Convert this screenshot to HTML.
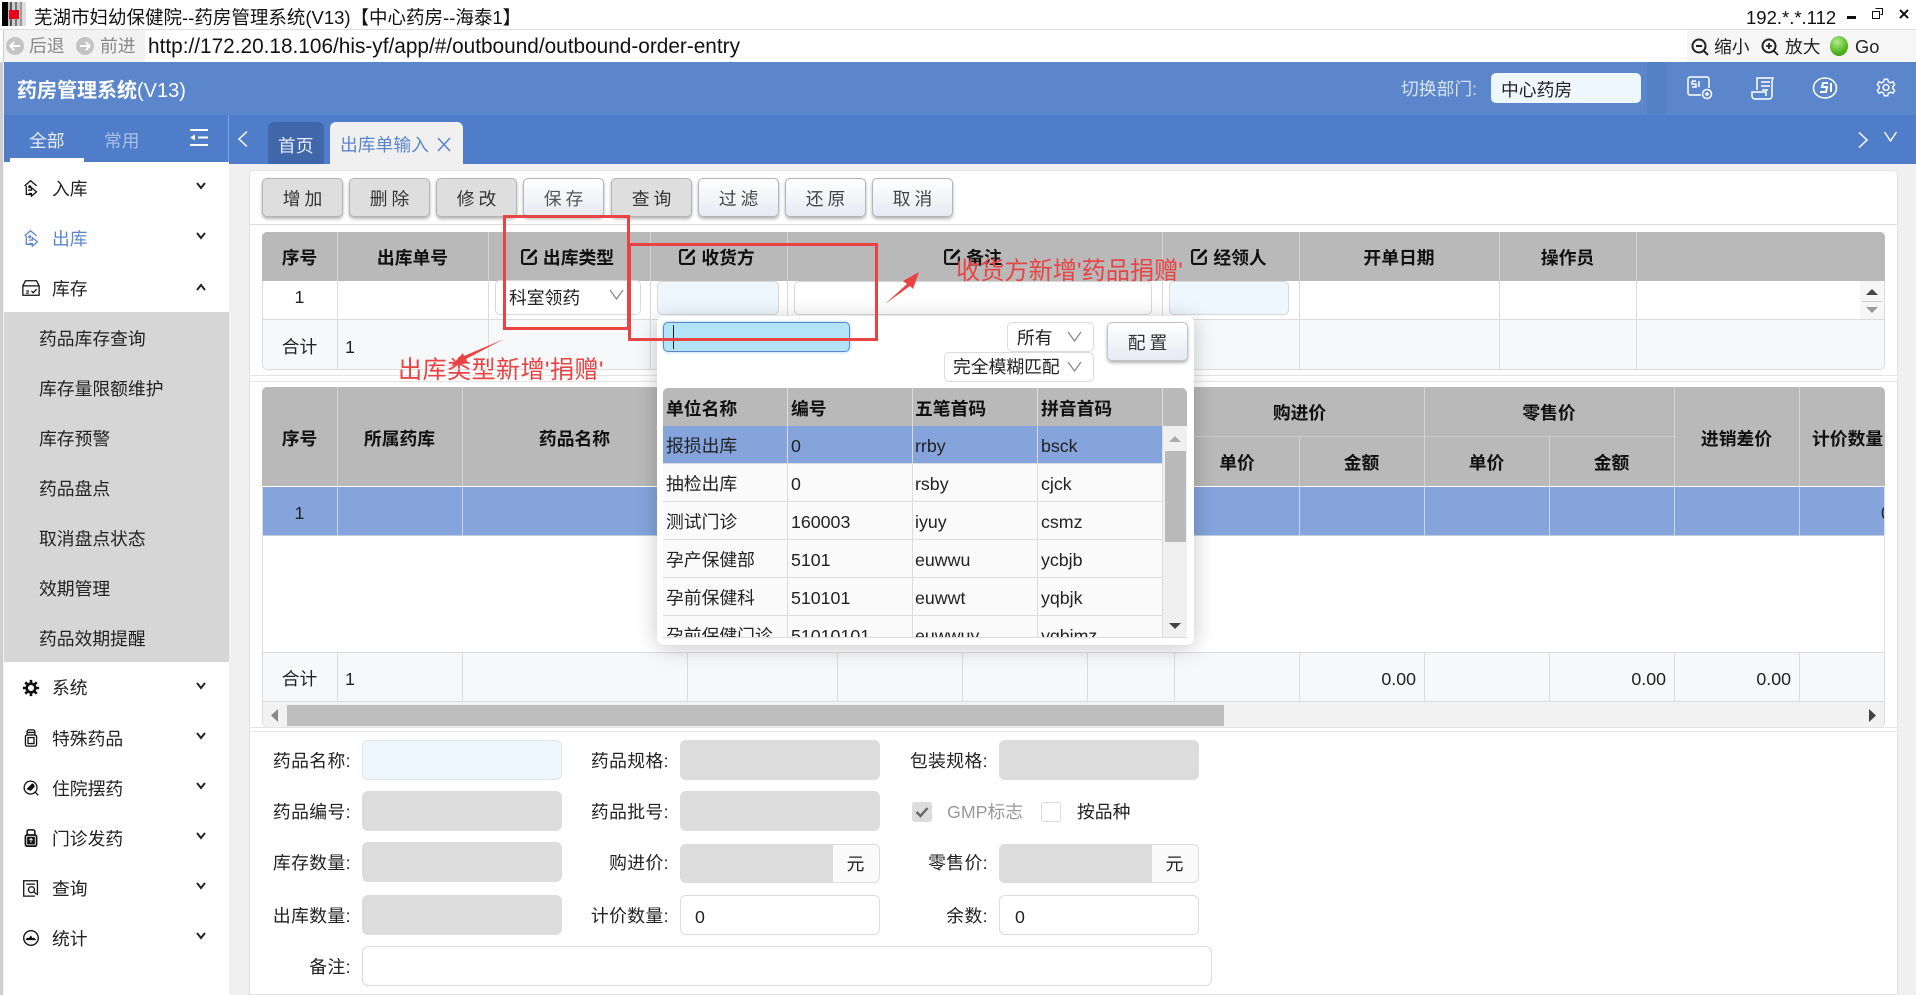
<!DOCTYPE html>
<html lang="zh-CN">
<head>
<meta charset="utf-8">
<title>药房管理系统</title>
<style>
html,body{margin:0;padding:0;width:1916px;height:995px;overflow:hidden;background:#f0f0f0}
body{position:relative;font-family:"Liberation Sans","Noto Sans CJK SC",sans-serif;font-size:17.8px;color:#222}
div,span,svg{box-sizing:border-box}
.a{position:absolute}
.t{position:absolute;white-space:nowrap;height:24px;line-height:24px}
.c{text-align:center}
.r{text-align:right}
.b{font-weight:bold;color:#111}
.v{position:absolute;width:1px;background:#dcdcdc}
.vh{position:absolute;width:1px;background:#d4d4d4}
.l{position:absolute;height:1px;background:#dcdcdc}
.btn{position:absolute;top:178px;width:81px;height:39px;line-height:41px;text-align:center;border:1px solid #b4b4b4;border-radius:5px;box-shadow:0 2px 3px rgba(0,0,0,.3);letter-spacing:4px;text-indent:4px;color:#333}
.g{background:#dedede}
.w{background:linear-gradient(#fff,#e6eaf2)}
.sub{position:absolute;left:39px;white-space:nowrap;height:24px;line-height:24px;color:#222}
.men{position:absolute;left:52px;white-space:nowrap;height:24px;line-height:24px;color:#222}
.f{position:absolute;width:200px;height:40px;border-radius:6px}
.dis{background:#dcdcdc}
.inp{background:#fff;border:1px solid #dcdcdc}
.lb{position:absolute;white-space:nowrap;height:24px;line-height:24px;text-align:right;color:#222;letter-spacing:.4px}
.chev{position:absolute;left:194px;width:14px;height:10px}
.ic{position:absolute;left:22px;width:18px;height:18px}
.ed{vertical-align:-2px;margin-right:4px}
</style>
</head>
<body>

<!-- title bar -->
<div class="a" style="left:0;top:0;width:1916px;height:30px;background:#fff;border-bottom:1px solid #dedede"></div>
<div class="a" style="left:2px;top:2px;width:24px;height:24px;background:linear-gradient(90deg,#000 0 6px,#bbb 6px 8px,#555 8px 10px,#ccc 10px 13px,#777 13px 15px,#ccc 15px 18px,#999 18px 20px,#ddd 20px 24px)"></div>
<div class="a" style="left:9px;top:10px;width:10px;height:9px;background:#e8001c"></div>
<div class="t" style="left:34px;top:6px;font-size:18.5px;color:#111">芜湖市妇幼保健院--药房管理系统(V13)【中心药房--海泰1】</div>
<div class="t" style="left:1746px;top:6px;font-size:18.5px;color:#111">192.*.*.112</div>
<div class="a" style="left:1847px;top:16px;width:9px;height:3px;background:#111"></div>
<svg class="a" style="left:1872px;top:8px" width="11" height="11" viewBox="0 0 11 11"><path d="M3.500 .5h7v6h-2M.5 3.500h7v7h-7z" fill="none" stroke="#111"/></svg>
<svg class="a" style="left:1899px;top:9px" width="10" height="10" viewBox="0 0 10 10"><path d="M1 1l8 8M9 1L1 9" stroke="#111" stroke-width="2"/></svg>

<!-- address bar -->
<div class="a" style="left:0;top:30px;width:1916px;height:32px;background:#fff"></div>
<div class="a" style="left:3px;top:30px;width:142px;height:32px;background:#f2f2f2;border-left:1px solid #ccc"></div>
<div class="a" style="left:6px;top:37px;width:18px;height:18px;border-radius:50%;background:#c4c4c4"></div>
<svg class="a" style="left:9px;top:41px" width="12" height="10" viewBox="0 0 12 10"><path d="M5 1L1.500 5 5 9M2 5h9" fill="none" stroke="#fff" stroke-width="2"/></svg>
<div class="t" style="left:29px;top:34px;color:#888">后退</div>
<div class="a" style="left:76px;top:37px;width:18px;height:18px;border-radius:50%;background:#c4c4c4"></div>
<svg class="a" style="left:79px;top:41px" width="12" height="10" viewBox="0 0 12 10"><path d="M7 1l3.500 4L7 9M10 5H1" fill="none" stroke="#fff" stroke-width="2"/></svg>
<div class="t" style="left:100px;top:34px;color:#888">前进</div>
<div class="t" style="left:148px;top:35px;font-size:20.8px;color:#111">http://172.20.18.106/his-yf/app/#/outbound/outbound-order-entry</div>
<div class="a" style="left:1687px;top:31px;width:229px;height:31px;background:#f6f6f6"></div>
<svg class="a" style="left:1690px;top:37px" width="20" height="20" viewBox="0 0 20 20"><circle cx="9" cy="9" r="6.500" fill="none" stroke="#222" stroke-width="2"/><path d="M6 9h6M14 14l4 4" stroke="#222" stroke-width="2"/></svg>
<div class="t" style="left:1714px;top:35px;color:#222">缩小</div>
<svg class="a" style="left:1760px;top:37px" width="20" height="20" viewBox="0 0 20 20"><circle cx="9" cy="9" r="6.500" fill="none" stroke="#222" stroke-width="2"/><path d="M6 9h6M9 6v6M14 14l4 4" stroke="#222" stroke-width="1.800"/></svg>
<div class="t" style="left:1785px;top:35px;color:#222">放大</div>
<div class="a" style="left:1830px;top:36px;width:18px;height:20px;border-radius:50%;background:radial-gradient(circle at 40% 30%,#b6ec8e,#52b51f 60%,#2d8a10)"></div>
<div class="t" style="left:1855px;top:35px;font-size:18.3px;color:#222">Go</div>

<!-- app header -->
<div class="a" style="left:4px;top:62px;width:1912px;height:53px;background:#5b86cc"></div>
<div class="t" style="left:17px;top:79px;font-size:20px;font-weight:bold;color:#fff">药房管理系统<span style="font-weight:normal">(V13)</span></div>
<div class="t" style="left:1401px;top:77px;color:#d6e2f4">切换部门:</div>
<div class="a" style="left:1491px;top:73px;width:150px;height:30px;background:#eef6fe;border-radius:5px"></div>
<div class="t" style="left:1501px;top:78px;color:#222">中心药房</div>
<div class="a" style="left:1647px;top:62px;width:20px;height:52px;background:#5480c6"></div>
<svg class="a" style="left:1687px;top:76px" width="26" height="24" viewBox="0 0 26 24" fill="none" stroke="#fff" stroke-width="1.500"><path d="M14 19H3a2 2 0 0 1-2-2V3a2 2 0 0 1 2-2h17a2 2 0 0 1 2 2v9"/><circle cx="20" cy="18" r="4.500"/><circle cx="20" cy="18" r="1" fill="#fff"/><path d="M5 5h4M5 5v3h4v3H5M12 5v6"/></svg>
<svg class="a" style="left:1750px;top:76px" width="26" height="24" viewBox="0 0 26 24" fill="none" stroke="#fff" stroke-width="1.500"><path d="M7 14V2h16l-1 3v15a3 3 0 0 1-3 3H5a3 3 0 0 1-3-3v-4h14v4"/><path d="M11 6h9M11 10h9M12 14h6"/></svg>
<svg class="a" style="left:1809px;top:76px" width="32" height="24" viewBox="0 0 32 24" fill="none" stroke="#fff" stroke-width="1.600"><ellipse cx="16" cy="12" rx="11.500" ry="10"/><path d="M19 7h-5l-1 4h5l-1 5h-6M22 7v9" stroke-width="2"/></svg>
<svg class="a" style="left:1876px;top:77px" width="20" height="21" viewBox="0 0 24 24" fill="none" stroke="#fff" stroke-width="1.700"><circle cx="12" cy="12" r="3.500"/><path d="M10 2h4l.8 3 2.700 1.500L20.400 5l2 3.500-2.200 2.200v2.600l2.200 2.200-2 3.500-2.900-1.500-2.700 1.500-.8 3h-4l-.8-3-2.700-1.500L3.600 19l-2-3.500 2.200-2.200v-2.600L1.600 8.500l2-3.500 2.900 1.500L9.200 5z"/></svg>

<!-- tabs bar -->
<div class="a" style="left:4px;top:115px;width:1912px;height:49px;background:#4f7dc9"></div>
<div class="a" style="left:228px;top:115px;width:1px;height:49px;background:#84a4db"></div>
<div class="t" style="left:29px;top:129px;color:#e6edf9">全部</div>
<div class="t" style="left:104px;top:129px;color:#a9c0e6">常用</div>
<div class="a" style="left:10px;top:158px;width:74px;height:4px;background:#fff"></div>
<svg class="a" style="left:190px;top:129px" width="19" height="17" viewBox="0 0 19 17"><path d="M0 1h18M8 8.500h10M0 16h18" stroke="#fff" stroke-width="2"/><path d="M5 5.500v6L0 8.500z" fill="#fff"/></svg>
<svg class="a" style="left:237px;top:130px" width="12" height="18" viewBox="0 0 12 18"><path d="M10 1.500L2 9l8 7.500" fill="none" stroke="#fff" stroke-width="1.500"/></svg>
<div class="a" style="left:268px;top:122px;width:56px;height:42px;background:#3f67aa;border-radius:6px 6px 0 0"></div>
<div class="t" style="left:278px;top:134px;color:#e8eef8">首页</div>
<div class="a" style="left:330px;top:122px;width:133px;height:42px;background:#f0f0f0;border-radius:6px 6px 0 0"></div>
<div class="t" style="left:340px;top:133px;color:#5b86cc">出库单输入</div>
<svg class="a" style="left:437px;top:137px" width="14" height="15" viewBox="0 0 14 15"><path d="M1 1l12 13M13 1L1 14" stroke="#5b86cc" stroke-width="1.600"/></svg>
<svg class="a" style="left:1857px;top:131px" width="12" height="18" viewBox="0 0 12 18"><path d="M2 1.500L10 9l-8 7.500" fill="none" stroke="#fff" stroke-width="1.500"/></svg>
<svg class="a" style="left:1883px;top:131px" width="15" height="11" viewBox="0 0 15 11"><path d="M1.500 1L7.500 10l6-9" fill="none" stroke="#fff" stroke-width="1.400"/></svg>

<!-- sidebar -->
<div class="a" style="left:0;top:62px;width:3px;height:933px;background:#cfcfcf"></div>
<div class="a" style="left:4px;top:162px;width:225px;height:833px;background:#fff"></div>
<div class="a" style="left:4px;top:312px;width:225px;height:350px;background:#d6d6d6"></div>
<div class="men" style="top:177px">入库</div>
<div class="men" style="top:227px;color:#5b86cc">出库</div>
<div class="men" style="top:277px">库存</div>
<div class="sub" style="top:327px">药品库存查询</div>
<div class="sub" style="top:377px">库存量限额维护</div>
<div class="sub" style="top:427px">库存预警</div>
<div class="sub" style="top:477px">药品盘点</div>
<div class="sub" style="top:527px">取消盘点状态</div>
<div class="sub" style="top:577px">效期管理</div>
<div class="sub" style="top:627px">药品效期提醒</div>
<div class="men" style="top:676px">系统</div>
<div class="men" style="top:727px">特殊药品</div>
<div class="men" style="top:777px">住院摆药</div>
<div class="men" style="top:827px">门诊发药</div>
<div class="men" style="top:877px">查询</div>
<div class="men" style="top:927px">统计</div>

<svg class="chev" style="top:181px" viewBox="0 0 14 10"><path d="M3 2l4 5 4-5" fill="none" stroke="#222" stroke-width="2"/></svg>
<svg class="chev" style="top:231px" viewBox="0 0 14 10"><path d="M3 2l4 5 4-5" fill="none" stroke="#222" stroke-width="2"/></svg>
<svg class="chev" style="top:282px" viewBox="0 0 14 10"><path d="M3 8l4-5 4 5" fill="none" stroke="#222" stroke-width="2"/></svg>
<svg class="chev" style="top:681px" viewBox="0 0 14 10"><path d="M3 2l4 5 4-5" fill="none" stroke="#222" stroke-width="2"/></svg>
<svg class="chev" style="top:731px" viewBox="0 0 14 10"><path d="M3 2l4 5 4-5" fill="none" stroke="#222" stroke-width="2"/></svg>
<svg class="chev" style="top:781px" viewBox="0 0 14 10"><path d="M3 2l4 5 4-5" fill="none" stroke="#222" stroke-width="2"/></svg>
<svg class="chev" style="top:831px" viewBox="0 0 14 10"><path d="M3 2l4 5 4-5" fill="none" stroke="#222" stroke-width="2"/></svg>
<svg class="chev" style="top:881px" viewBox="0 0 14 10"><path d="M3 2l4 5 4-5" fill="none" stroke="#222" stroke-width="2"/></svg>
<svg class="chev" style="top:931px" viewBox="0 0 14 10"><path d="M3 2l4 5 4-5" fill="none" stroke="#222" stroke-width="2"/></svg>

<svg class="ic" style="top:179px" viewBox="0 0 21 21" fill="none" stroke="#111" stroke-width="1.500"><path d="M3 8l7-6 7 6M5 8v10h6M5 18h5"/><circle cx="9" cy="9" r="1" fill="#111"/><path d="M7 13h4v-3l6 5-6 5v-3H8"/></svg>
<svg class="ic" style="top:229px" viewBox="0 0 21 21" fill="none" stroke="#5b86cc" stroke-width="1.500"><path d="M3 8l7-6 7 6M5 8v10h6M5 18h5"/><circle cx="9" cy="9" r="1" fill="#5b86cc"/><path d="M8 13h4v-3l6 5-6 5v-3H8"/></svg>
<svg class="ic" style="top:279px" viewBox="0 0 21 21" fill="none" stroke="#111" stroke-width="1.500"><path d="M1 8l3-6h13l3 6v11H1zM1 8h19M5 14h3M5 16.500h3M11 14l2 2 4-4"/></svg>
<svg class="ic" style="top:679px" viewBox="0 0 21 21"><circle cx="10.500" cy="10.500" r="5" fill="none" stroke="#111" stroke-width="3"/><path d="M10.500 1v4M10.500 16v4M1 10.500h4M16 10.500h4M3.800 3.800l3 3M14.200 14.200l3 3M17.200 3.800l-3 3M6.800 14.200l-3 3" stroke="#111" stroke-width="3"/></svg>
<svg class="ic" style="top:729px" viewBox="0 0 21 21" fill="none" stroke="#111" stroke-width="1.500"><rect x="4" y="7" width="13" height="13" rx="2"/><rect x="7" y="10" width="7" height="7"/><path d="M6 7V3a2 2 0 0 1 2-2h5a2 2 0 0 1 2 2v4M6 4h9"/></svg>
<svg class="ic" style="top:779px" viewBox="0 0 21 21" fill="none" stroke="#111" stroke-width="1.500"><circle cx="10" cy="10" r="7.500"/><path d="M15 15l4 4"/><path d="M6.500 11.500L12 6a3 3 0 0 1 2 3l-4 4z" fill="#111"/></svg>
<svg class="ic" style="top:829px" viewBox="0 0 21 21"><rect x="4" y="7" width="13" height="13" rx="2" fill="none" stroke="#111" stroke-width="2"/><path d="M6 7V3a2 2 0 0 1 2-2h5a2 2 0 0 1 2 2v4" fill="none" stroke="#111" stroke-width="1.800"/><rect x="6" y="9" width="9" height="9" fill="#111"/><path d="M10.500 16v-5M8.500 13l2-2 2 2" stroke="#fff" fill="none"/></svg>
<svg class="ic" style="top:879px" viewBox="0 0 21 21" fill="none" stroke="#111" stroke-width="1.500"><path d="M18 19V2H2v18h13M5 6h10"/><circle cx="11" cy="12.500" r="3.500"/><path d="M14 15l3 3"/></svg>
<svg class="ic" style="top:929px" viewBox="0 0 21 21"><circle cx="10.500" cy="10.500" r="8.500" fill="none" stroke="#111" stroke-width="1.600"/><path d="M4 13h13l-3-3-2 .5-1.500-3-2.500 3L6 10z" fill="#111"/></svg>

<!-- main card -->
<div class="a" style="left:249px;top:170px;width:1649px;height:825px;background:#fff;border:1px solid #e2e2e2;border-radius:5px 5px 0 0"></div>
<div class="btn g" style="left:262px">增加</div>
<div class="btn g" style="left:349px">删除</div>
<div class="btn g" style="left:436px">修改</div>
<div class="btn w" style="left:523px;color:#555">保存</div>
<div class="btn g" style="left:611px">查询</div>
<div class="btn w" style="left:698px;color:#444">过滤</div>
<div class="btn w" style="left:785px;color:#444">还原</div>
<div class="btn w" style="left:872px;color:#444">取消</div>
<div class="l" style="left:250px;top:224px;width:1647px"></div>

<!-- table 1 -->
<div class="a" style="left:262px;top:232px;width:1623px;height:138px;background:#fff;border:1px solid #dcdcdc;border-radius:5px"></div>
<div class="a" style="left:262px;top:232px;width:1623px;height:49px;background:#b9b9b9;border-radius:5px 5px 0 0"></div>
<div class="a" style="left:263px;top:320px;width:1621px;height:49px;background:#f7f8fa;border-radius:0 0 5px 5px"></div>
<div class="l" style="left:262px;top:319px;width:1623px;background:#dcdcdc"></div>
<div class="vh" style="left:337px;top:232px;height:49px"></div><div class="vh" style="left:488px;top:232px;height:49px"></div><div class="vh" style="left:650px;top:232px;height:49px"></div><div class="vh" style="left:787px;top:232px;height:49px"></div><div class="vh" style="left:1162px;top:232px;height:49px"></div><div class="vh" style="left:1299px;top:232px;height:49px"></div><div class="vh" style="left:1499px;top:232px;height:49px"></div><div class="vh" style="left:1636px;top:232px;height:49px"></div>
<div class="v" style="left:337px;top:281px;height:89px"></div><div class="v" style="left:488px;top:281px;height:89px"></div><div class="v" style="left:650px;top:281px;height:89px"></div><div class="v" style="left:787px;top:281px;height:89px"></div><div class="v" style="left:1162px;top:281px;height:89px"></div><div class="v" style="left:1299px;top:281px;height:89px"></div><div class="v" style="left:1499px;top:281px;height:89px"></div><div class="v" style="left:1636px;top:281px;height:89px"></div>
<div class="t b c" style="left:262px;width:75px;top:246px">序号</div>
<div class="t b c" style="left:337px;width:151px;top:246px">出库单号</div>
<div class="t b c" style="left:486px;width:162px;top:246px"><svg class="ed" width="19" height="18" viewBox="0 0 17 17"><path d="M9 2H3a1.500 1.500 0 0 0-1.500 1.500v10A1.500 1.500 0 0 0 3 15h10a1.500 1.500 0 0 0 1.500-1.500V8" fill="none" stroke="#111" stroke-width="2"/><path d="M6 11l1-3 7-7 2 2-7 7z" fill="#111"/></svg>出库类型</div>
<div class="t b c" style="left:648px;width:137px;top:246px"><svg class="ed" width="19" height="18" viewBox="0 0 17 17"><path d="M9 2H3a1.500 1.500 0 0 0-1.500 1.500v10A1.500 1.500 0 0 0 3 15h10a1.500 1.500 0 0 0 1.500-1.500V8" fill="none" stroke="#111" stroke-width="2"/><path d="M6 11l1-3 7-7 2 2-7 7z" fill="#111"/></svg>收货方</div>
<div class="t b c" style="left:785px;width:375px;top:246px"><svg class="ed" width="19" height="18" viewBox="0 0 17 17"><path d="M9 2H3a1.500 1.500 0 0 0-1.500 1.500v10A1.500 1.500 0 0 0 3 15h10a1.500 1.500 0 0 0 1.500-1.500V8" fill="none" stroke="#111" stroke-width="2"/><path d="M6 11l1-3 7-7 2 2-7 7z" fill="#111"/></svg>备注</div>
<div class="t b c" style="left:1160px;width:137px;top:246px"><svg class="ed" width="19" height="18" viewBox="0 0 17 17"><path d="M9 2H3a1.500 1.500 0 0 0-1.500 1.500v10A1.500 1.500 0 0 0 3 15h10a1.500 1.500 0 0 0 1.500-1.500V8" fill="none" stroke="#111" stroke-width="2"/><path d="M6 11l1-3 7-7 2 2-7 7z" fill="#111"/></svg>经领人</div>
<div class="t b c" style="left:1299px;width:200px;top:246px">开单日期</div>
<div class="t b c" style="left:1499px;width:137px;top:246px">操作员</div>
<div class="t c" style="left:262px;width:75px;top:285px">1</div>
<div class="a" style="left:495px;top:280px;width:146px;height:35px;background:#fff;border:1px solid #d8d8d8;border-radius:5px"></div>
<div class="t" style="left:509px;top:286px">科室领药</div>
<svg class="a" style="left:609px;top:289px" width="15" height="11" viewBox="0 0 15 11"><path d="M1 1l6.500 9L14 1" fill="none" stroke="#888" stroke-width="1.300"/></svg>
<div class="a" style="left:657px;top:281px;width:122px;height:34px;background:#eef6fe;border:1px solid #d8d8d8;border-radius:5px"></div>
<div class="a" style="left:794px;top:281px;width:358px;height:34px;background:#fff;border:1px solid #d8d8d8;border-radius:5px"></div>
<div class="a" style="left:1169px;top:281px;width:120px;height:34px;background:#eef6fe;border:1px solid #d8d8d8;border-radius:5px"></div>
<div class="a" style="left:1860px;top:281px;width:24px;height:38px;background:#f6f6f6"></div>
<div class="a" style="left:1862px;top:301px;width:20px;height:1px;background:#ccc"></div>
<svg class="a" style="left:1865px;top:288px" width="14" height="8" viewBox="0 0 14 8"><path d="M7 1l6 6H1z" fill="#444"/></svg>
<svg class="a" style="left:1865px;top:306px" width="14" height="8" viewBox="0 0 14 8"><path d="M7 7L1 1h12z" fill="#999"/></svg>
<div class="t c" style="left:262px;width:75px;top:335px">合计</div>
<div class="t" style="left:345px;top:335px">1</div>
<div class="l" style="left:250px;top:375px;width:1647px;background:#e4e4e4"></div>
<div class="l" style="left:250px;top:381px;width:1647px;background:#e4e4e4"></div>

<!-- table 2 -->
<div class="a" style="left:262px;top:387px;width:1623px;height:340px;background:#fff;border:1px solid #dcdcdc;border-radius:5px"></div>
<div class="a" style="left:262px;top:387px;width:1623px;height:99px;background:#b9b9b9;border-radius:5px 5px 0 0"></div>
<div class="a" style="left:263px;top:487px;width:1621px;height:49px;background:#84a4db;border-bottom:1px solid #c6cedd"></div>
<div class="a" style="left:263px;top:652px;width:1621px;height:50px;background:#f7f8fa;border-top:1px solid #dcdcdc;border-bottom:1px solid #dcdcdc"></div>
<div class="a" style="left:263px;top:702px;width:1621px;height:25px;background:#f2f2f2;border-radius:0 0 5px 5px"></div>
<div class="a" style="left:287px;top:705px;width:937px;height:21px;background:#bebebe"></div>
<svg class="a" style="left:270px;top:708px" width="9" height="15" viewBox="0 0 9 15"><path d="M8 1v13L1 7.500z" fill="#888"/></svg>
<svg class="a" style="left:1868px;top:708px" width="9" height="15" viewBox="0 0 9 15"><path d="M1 1v13l7-6.500z" fill="#444"/></svg>
<div class="l" style="left:1175px;top:436px;width:499px;background:#ccc"></div>
<div class="vh" style="left:337px;top:387px;height:99px"></div><div class="vh" style="left:462px;top:387px;height:99px"></div><div class="vh" style="left:1175px;top:387px;height:99px"></div><div class="vh" style="left:1299px;top:436px;height:50px"></div><div class="vh" style="left:1424px;top:387px;height:99px"></div><div class="vh" style="left:1549px;top:436px;height:50px"></div><div class="vh" style="left:1674px;top:387px;height:99px"></div><div class="vh" style="left:1799px;top:387px;height:99px"></div>
<div class="v" style="left:337px;top:486px;height:50px;background:#c8d6ee"></div><div class="v" style="left:462px;top:486px;height:50px;background:#c8d6ee"></div><div class="v" style="left:1299px;top:486px;height:50px;background:#c8d6ee"></div><div class="v" style="left:1424px;top:486px;height:50px;background:#c8d6ee"></div><div class="v" style="left:1549px;top:486px;height:50px;background:#c8d6ee"></div><div class="v" style="left:1674px;top:486px;height:50px;background:#c8d6ee"></div><div class="v" style="left:1799px;top:486px;height:50px;background:#c8d6ee"></div>
<div class="v" style="left:337px;top:652px;height:50px"></div><div class="v" style="left:462px;top:652px;height:50px"></div><div class="v" style="left:687px;top:652px;height:50px"></div><div class="v" style="left:837px;top:652px;height:50px"></div><div class="v" style="left:962px;top:652px;height:50px"></div><div class="v" style="left:1087px;top:652px;height:50px"></div><div class="v" style="left:1174px;top:652px;height:50px"></div><div class="v" style="left:1299px;top:652px;height:50px"></div><div class="v" style="left:1424px;top:652px;height:50px"></div><div class="v" style="left:1549px;top:652px;height:50px"></div><div class="v" style="left:1674px;top:652px;height:50px"></div><div class="v" style="left:1799px;top:652px;height:50px"></div>
<div class="t b c" style="left:262px;width:75px;top:427px">序号</div>
<div class="t b c" style="left:337px;width:125px;top:427px">所属药库</div>
<div class="t b c" style="left:462px;width:225px;top:427px">药品名称</div>
<div class="t b c" style="left:1175px;width:249px;top:401px">购进价</div>
<div class="t b c" style="left:1424px;width:250px;top:401px">零售价</div>
<div class="t b c" style="left:1175px;width:124px;top:451px">单价</div>
<div class="t b c" style="left:1299px;width:125px;top:451px">金额</div>
<div class="t b c" style="left:1424px;width:125px;top:451px">单价</div>
<div class="t b c" style="left:1549px;width:125px;top:451px">金额</div>
<div class="t b c" style="left:1674px;width:125px;top:427px">进销差价</div>
<div class="t b" style="left:1812px;width:72px;top:427px;overflow:hidden">计价数量</div>
<div class="t c" style="left:262px;width:75px;top:501px">1</div>
<div class="t" style="left:1881px;width:3px;top:501px;overflow:hidden">0</div>
<div class="t c" style="left:262px;width:75px;top:667px">合计</div>
<div class="t" style="left:345px;top:667px">1</div>
<div class="t r" style="left:1316px;width:100px;top:667px">0.00</div>
<div class="t r" style="left:1566px;width:100px;top:667px">0.00</div>
<div class="t r" style="left:1691px;width:100px;top:667px">0.00</div>
<div class="l" style="left:250px;top:727px;width:1647px;background:#e4e4e4"></div>
<div class="l" style="left:250px;top:731px;width:1647px;background:#e4e4e4"></div>

<!-- form -->
<div class="lb" style="left:251px;width:100px;top:749px">药品名称:</div>
<div class="f" style="left:362px;top:740px;background:#eef6fe;border:1px solid #dde6ee"></div>
<div class="lb" style="left:569px;width:100px;top:749px">药品规格:</div>
<div class="f dis" style="left:680px;top:740px"></div>
<div class="lb" style="left:888px;width:100px;top:749px">包装规格:</div>
<div class="f dis" style="left:999px;top:740px"></div>

<div class="lb" style="left:251px;width:100px;top:800px">药品编号:</div>
<div class="f dis" style="left:362px;top:791px"></div>
<div class="lb" style="left:569px;width:100px;top:800px">药品批号:</div>
<div class="f dis" style="left:680px;top:791px"></div>
<div class="a" style="left:912px;top:802px;width:20px;height:20px;background:#dcdcdc;border-radius:3px"></div>
<svg class="a" style="left:915px;top:806px" width="14" height="12" viewBox="0 0 14 12"><path d="M1.500 6l4 4 7-8" fill="none" stroke="#666" stroke-width="2.400"/></svg>
<div class="t" style="left:947px;top:800px;color:#999">GMP标志</div>
<div class="a" style="left:1041px;top:802px;width:20px;height:20px;background:#fff;border:1px solid #dcdcdc;border-radius:3px"></div>
<div class="t" style="left:1077px;top:800px">按品种</div>

<div class="lb" style="left:251px;width:100px;top:851px">库存数量:</div>
<div class="f dis" style="left:362px;top:842px"></div>
<div class="lb" style="left:569px;width:100px;top:851px">购进价:</div>
<div class="f" style="left:680px;top:844px;height:39px;background:#fafafa;border:1px solid #dcdcdc"></div>
<div class="a" style="left:680px;top:844px;width:153px;height:39px;background:#dcdcdc;border-radius:6px 0 0 6px"></div>
<div class="t c" style="left:832px;width:47px;top:852px">元</div>
<div class="lb" style="left:888px;width:100px;top:851px">零售价:</div>
<div class="f" style="left:999px;top:844px;height:39px;background:#fafafa;border:1px solid #dcdcdc"></div>
<div class="a" style="left:999px;top:844px;width:153px;height:39px;background:#dcdcdc;border-radius:6px 0 0 6px"></div>
<div class="t c" style="left:1151px;width:47px;top:852px">元</div>

<div class="lb" style="left:251px;width:100px;top:904px">出库数量:</div>
<div class="f dis" style="left:362px;top:895px"></div>
<div class="lb" style="left:569px;width:100px;top:904px">计价数量:</div>
<div class="f inp" style="left:680px;top:895px"></div>
<div class="t" style="left:695px;top:905px">0</div>
<div class="lb" style="left:888px;width:100px;top:904px">余数:</div>
<div class="f inp" style="left:999px;top:895px"></div>
<div class="t" style="left:1015px;top:905px">0</div>

<div class="lb" style="left:251px;width:100px;top:955px">备注:</div>
<div class="f inp" style="left:362px;top:946px;width:850px"></div>

<!-- popup -->
<div class="a" style="left:657px;top:316px;width:537px;height:329px;background:#fff;border-radius:7px;box-shadow:0 3px 22px rgba(0,0,0,.22)"></div>
<div class="a" style="left:663px;top:322px;width:187px;height:30px;background:#b3e3f7;border:1px solid #5b86cc;border-radius:5px;box-shadow:0 0 3px #9ccbf0"></div>
<div class="a" style="left:673px;top:325px;width:1px;height:24px;background:#222"></div>
<div class="a" style="left:1007px;top:322px;width:87px;height:30px;background:#fff;border:1px solid #dcdcdc;border-radius:5px"></div>
<div class="t" style="left:1017px;top:326px">所有</div>
<svg class="a" style="left:1067px;top:331px" width="15" height="11" viewBox="0 0 15 11"><path d="M1 1l6.500 9L14 1" fill="none" stroke="#888" stroke-width="1.300"/></svg>
<div class="a" style="left:944px;top:352px;width:150px;height:30px;background:#fff;border:1px solid #dcdcdc;border-radius:5px"></div>
<div class="t" style="left:953px;top:355px">完全模糊匹配</div>
<svg class="a" style="left:1067px;top:361px" width="15" height="11" viewBox="0 0 15 11"><path d="M1 1l6.500 9L14 1" fill="none" stroke="#888" stroke-width="1.300"/></svg>
<div class="a" style="left:1107px;top:322px;width:81px;height:39px;line-height:41px;text-align:center;letter-spacing:4px;text-indent:4px;background:linear-gradient(#fff,#e6eaf2);border:1px solid #c4c4c4;border-radius:5px;box-shadow:0 2px 3px rgba(0,0,0,.3);color:#333">配置</div>

<div class="a" style="left:663px;top:388px;width:524px;height:250px;overflow:hidden;background:#fafafa;border-radius:5px 5px 0 0;border-bottom:1px solid #dcdcdc">
  <div class="a" style="left:0;top:0;width:524px;height:38px;background:#b9b9b9"></div>
  <div class="a" style="left:0;top:38px;width:499px;height:38px;background:#84a4db"></div>
  <div class="a" style="left:499px;top:38px;width:25px;height:212px;background:#f0f0f0"></div>
  <div class="a" style="left:502px;top:63px;width:21px;height:91px;background:#b9b9b9"></div>
  <svg class="a" style="left:505px;top:47px" width="14" height="8" viewBox="0 0 14 8"><path d="M7 1l6 6H1z" fill="#aaa"/></svg>
  <svg class="a" style="left:505px;top:234px" width="14" height="8" viewBox="0 0 14 8"><path d="M7 7L1 1h12z" fill="#444"/></svg>
  <div class="l" style="left:0;top:75px;width:499px"></div><div class="l" style="left:0;top:113px;width:499px"></div><div class="l" style="left:0;top:151px;width:499px"></div><div class="l" style="left:0;top:189px;width:499px"></div><div class="l" style="left:0;top:227px;width:499px"></div>
  <div class="v" style="left:124px;top:0;height:250px"></div><div class="v" style="left:249px;top:0;height:250px"></div><div class="v" style="left:374px;top:0;height:250px"></div><div class="v" style="left:499px;top:0;height:250px"></div>
  <div class="t b" style="left:3px;top:9px">单位名称</div><div class="t b" style="left:128px;top:9px">编号</div><div class="t b" style="left:252px;top:9px">五笔首码</div><div class="t b" style="left:378px;top:9px">拼音首码</div>
  <div class="t" style="left:3px;top:46px">报损出库</div><div class="t" style="left:128px;top:46px">0</div><div class="t" style="left:252px;top:46px">rrby</div><div class="t" style="left:378px;top:46px">bsck</div>
  <div class="t" style="left:3px;top:84px">抽检出库</div><div class="t" style="left:128px;top:84px">0</div><div class="t" style="left:252px;top:84px">rsby</div><div class="t" style="left:378px;top:84px">cjck</div>
  <div class="t" style="left:3px;top:122px">测试门诊</div><div class="t" style="left:128px;top:122px">160003</div><div class="t" style="left:252px;top:122px">iyuy</div><div class="t" style="left:378px;top:122px">csmz</div>
  <div class="t" style="left:3px;top:160px">孕产保健部</div><div class="t" style="left:128px;top:160px">5101</div><div class="t" style="left:252px;top:160px">euwwu</div><div class="t" style="left:378px;top:160px">ycbjb</div>
  <div class="t" style="left:3px;top:198px">孕前保健科</div><div class="t" style="left:128px;top:198px">510101</div><div class="t" style="left:252px;top:198px">euwwt</div><div class="t" style="left:378px;top:198px">yqbjk</div>
  <div class="t" style="left:3px;top:236px">孕前保健门诊</div><div class="t" style="left:128px;top:236px">51010101</div><div class="t" style="left:252px;top:236px">euwwuy</div><div class="t" style="left:378px;top:236px">yqbjmz</div>
</div>

<!-- annotations -->
<div class="a" style="left:503px;top:215px;width:127px;height:115px;border:3px solid #e94343"></div>
<div class="a" style="left:628px;top:243px;width:250px;height:98px;border:3px solid #e94343"></div>
<svg class="a" style="left:0;top:0" width="1916" height="995" viewBox="0 0 1916 995"><path d="M885 304L907 284l-4-3 16-9-6 17-3-3z" fill="#e94343"/><path d="M504 339L466 359l2 4-17 3 12-13 1 3z" fill="#e94343"/></svg>
<div class="t" style="left:956px;top:260px;font-size:24.2px;color:#e94343">收货方新增'药品捐赠'</div>
<div class="t" style="left:398px;top:359px;font-size:24.2px;letter-spacing:.3px;color:#e94343">出库类型新增'捐赠'</div>

</body>
</html>
